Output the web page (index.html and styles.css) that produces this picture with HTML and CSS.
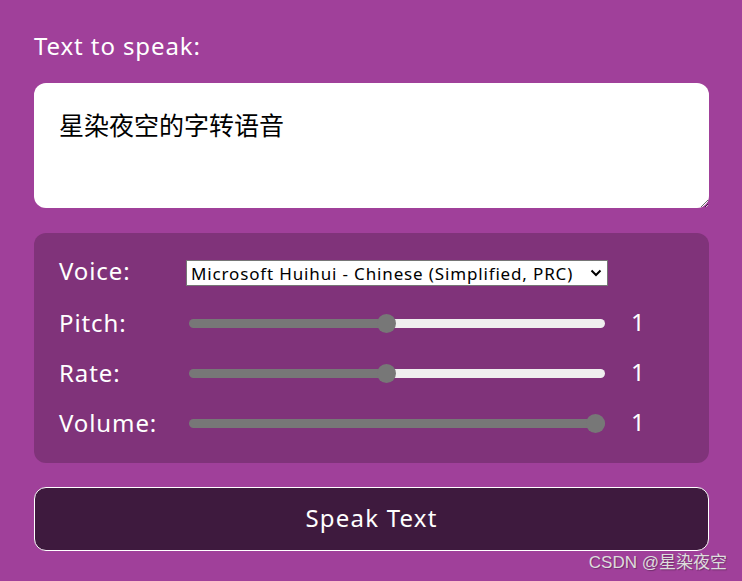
FILE: index.html
```html
<!DOCTYPE html>
<html lang="en">

<head>
    <meta charset="UTF-8">
    <meta name="viewport" content="width=device-width, initial-scale=1.0">
    <title>Text to Speech</title>
    <link rel="stylesheet" href="styles.css">
</head>

<body>
    <div class="container">
        <label class="text-label" for="text">Text to speak:</label>
        <textarea id="text">星染夜空的字转语音</textarea>

        <div class="controls">
            <div class="row">
                <label class="voice-label" for="voice">Voice:</label>
                <div class="select-wrap">
                    <select id="voice">
                        <option>Microsoft Huihui - Chinese (Simplified, PRC)</option>
                    </select>
                    <svg class="chevron" width="12" height="8" viewBox="0 0 12 8">
                        <path d="M1.5 1.5 L6 6 L10.5 1.5" fill="none" stroke="#000" stroke-width="2" />
                    </svg>
                </div>
            </div>
            <div class="row">
                <label for="pitch">Pitch:</label>
                <input type="range" id="pitch" min="0.1" max="2" step="0.1" value="1" style="--fill: 47.4%">
                <span class="value">1</span>
            </div>
            <div class="row">
                <label for="rate">Rate:</label>
                <input type="range" id="rate" min="0.1" max="2" step="0.1" value="1" style="--fill: 47.4%">
                <span class="value">1</span>
            </div>
            <div class="row">
                <label for="volume">Volume:</label>
                <input type="range" id="volume" min="0" max="1" step="0.1" value="1" style="--fill: 100%">
                <span class="value">1</span>
            </div>
        </div>

        <button class="speak">Speak Text</button>
    </div>

    <div class="watermark">CSDN @星染夜空</div>
</body>

</html>
```

FILE: styles.css
```css
* {
    box-sizing: border-box;
}

body {
    margin: 0;
    height: 581px;
    background-color: #a0409a;
    font-family: "Noto Sans", "Noto Sans CJK SC", sans-serif;
    letter-spacing: 0.9px;
    color: #fff;
    overflow: hidden;
}

.container {
    width: 675px;
    margin-left: 34px;
    padding-top: 28px;
    display: flex;
    flex-direction: column;
}

.text-label {
    font-size: 24px;
    line-height: 36px;
    margin-bottom: 19px;
}

textarea {
    height: 125px;
    border: none;
    border-radius: 12px;
    padding: 23px 25px;
    font-family: "Noto Sans CJK SC", sans-serif;
    font-size: 25px;
    letter-spacing: 0;
    color: #000;
    resize: vertical;
    outline: none;
}

.controls {
    margin-top: 25px;
    background-color: #80337a;
    border-radius: 12px;
    padding: 22px 25px 22px 25px;
    display: flex;
    flex-direction: column;
    gap: 14px;
}

.row {
    display: flex;
    align-items: center;
    height: 36px;
}

.row label {
    width: 127px;
    font-size: 24px;
    line-height: 30px;
}

.row .voice-label {
    padding-bottom: 4px;
}

.select-wrap {
    position: relative;
    width: 422px;
    height: 26px;
}

select {
    appearance: none;
    width: 100%;
    height: 100%;
    border: 1px solid #767676;
    border-radius: 0;
    background: #fff;
    font-family: "Noto Sans", sans-serif;
    font-size: 17px;
    letter-spacing: 0.85px;
    color: #000;
    padding: 0 20px 0 4px;
}

.chevron {
    position: absolute;
    right: 6px;
    top: 9px;
    pointer-events: none;
}

input[type="range"] {
    appearance: none;
    width: 416px;
    height: 9px;
    margin: 0 0 0 3px;
    border-radius: 5px;
    background: linear-gradient(to right, #777 var(--fill), #efefef var(--fill));
}

input[type="range"]::-webkit-slider-thumb {
    appearance: none;
    width: 19px;
    height: 19px;
    border-radius: 50%;
    background-color: #777;
}

.value {
    margin-left: 26px;
    font-size: 24px;
    line-height: 30px;
    padding-bottom: 2px;
}

.speak {
    margin-top: 24px;
    height: 64px;
    border: 1px solid #fff;
    border-radius: 12px;
    background-color: #3e1a3e;
    color: #fff;
    font-family: "Noto Sans", sans-serif;
    font-size: 24px;
    letter-spacing: 1.2px;
    padding-bottom: 4px;
}

.watermark {
    position: absolute;
    right: 15px;
    bottom: 8px;
    font-family: "Liberation Sans", "Noto Sans CJK SC", sans-serif;
    font-size: 17px;
    letter-spacing: 0;
    color: #ddd;
    text-shadow: 1px 1px 1px rgba(0, 0, 0, 0.3);
}
```
